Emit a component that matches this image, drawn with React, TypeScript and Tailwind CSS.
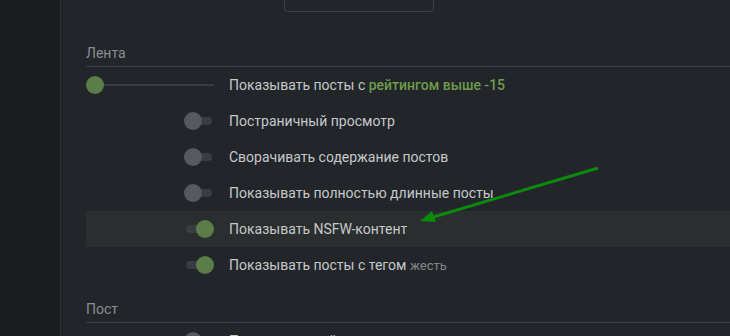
import React from 'react'

type Row = {
  label: React.ReactNode
  kind: 'slider' | 'toggle'
  on?: boolean
  active?: boolean
}

const feedRows: Row[] = [
  {
    kind: 'slider',
    label: (
      <>
        Показывать посты с{' '}
        <span className="font-medium text-[#6f9a4c]">рейтингом выше -15</span>
      </>
    ),
  },
  { kind: 'toggle', label: 'Постраничный просмотр' },
  { kind: 'toggle', label: 'Сворачивать содержание постов' },
  { kind: 'toggle', label: 'Показывать полностью длинные посты' },
  { kind: 'toggle', label: 'Показывать NSFW-контент', on: true, active: true },
  {
    kind: 'toggle',
    on: true,
    label: (
      <>
        Показывать посты с тегом{' '}
        <span className="text-[13px] text-[#85888b]">жесть</span>
      </>
    ),
  },
]

function Toggle({ on }: { on?: boolean }) {
  return (
    <div className="relative h-[18px] w-[30px]">
      <div className="absolute left-[2px] right-[2px] top-[5px] h-[8px] rounded-sm bg-[#393c41]" />
      <div
        className={`absolute top-0 h-[18px] w-[18px] rounded-full ${
          on ? 'right-0 bg-[#5b7d47]' : 'left-0 bg-[#56595d]'
        }`}
      />
    </div>
  )
}

function Slider() {
  return (
    <div className="relative h-[18px] w-[128px]">
      <div className="absolute left-[9px] right-0 top-[8px] h-[2px] bg-[#393c41]" />
      <div className="absolute left-0 top-0 h-[18px] w-[18px] rounded-full bg-[#5b7d47]" />
    </div>
  )
}

function SettingRow({ row }: { row: Row }) {
  return (
    <div
      className={`flex h-[36px] items-center ${row.active ? 'bg-[#2a2e2e]' : ''}`}
    >
      <div className="flex w-[143px] justify-end pr-[15px]">
        {row.kind === 'slider' ? <Slider /> : <Toggle on={row.on} />}
      </div>
      <div className="text-[14px] text-[#c6c8ca]">{row.label}</div>
    </div>
  )
}

function Section({ title, children }: { title: string; children: React.ReactNode }) {
  return (
    <div>
      <div className="border-b border-[#3a3d42] pb-[3px] text-[14px] leading-[20px] text-[#8b8e91]">
        {title}
      </div>
      <div>{children}</div>
    </div>
  )
}

export default function App() {
  return (
    <div
      className="relative flex h-[336px] w-[730px] overflow-hidden bg-[#22262a]"
      style={{ fontFamily: 'Roboto, "Liberation Sans", sans-serif' }}
    >
      {/* sidebar */}
      <div className="w-[61px] shrink-0 border-r border-[#2e3236] bg-[#1b1e21]" />

      {/* content */}
      <div className="flex-1 pl-[25px]">
        <div className="ml-[198px] h-[12px] w-[150px] rounded-b-sm border border-t-0 border-[#3c4045]" />

        <div className="mt-[31px]">
          <Section title="Лента">
            {feedRows.map((r, i) => (
              <SettingRow key={i} row={r} />
            ))}
          </Section>
        </div>

        <div className="mt-[16px]">
          <Section title="Пост">
            <SettingRow row={{ kind: 'toggle', label: 'Показывать рейтинг постов' }} />
          </Section>
        </div>
      </div>

      {/* annotation arrow */}
      <svg
        className="pointer-events-none absolute left-0 top-0"
        width={730}
        height={336}
        viewBox="0 0 730 336"
      >
        <line x1={598} y1={168} x2={430} y2={218} stroke="#0b8a0b" strokeWidth={3} />
        <polygon points="420,221 432,211 436,222" fill="#0b8a0b" />
      </svg>
    </div>
  )
}
